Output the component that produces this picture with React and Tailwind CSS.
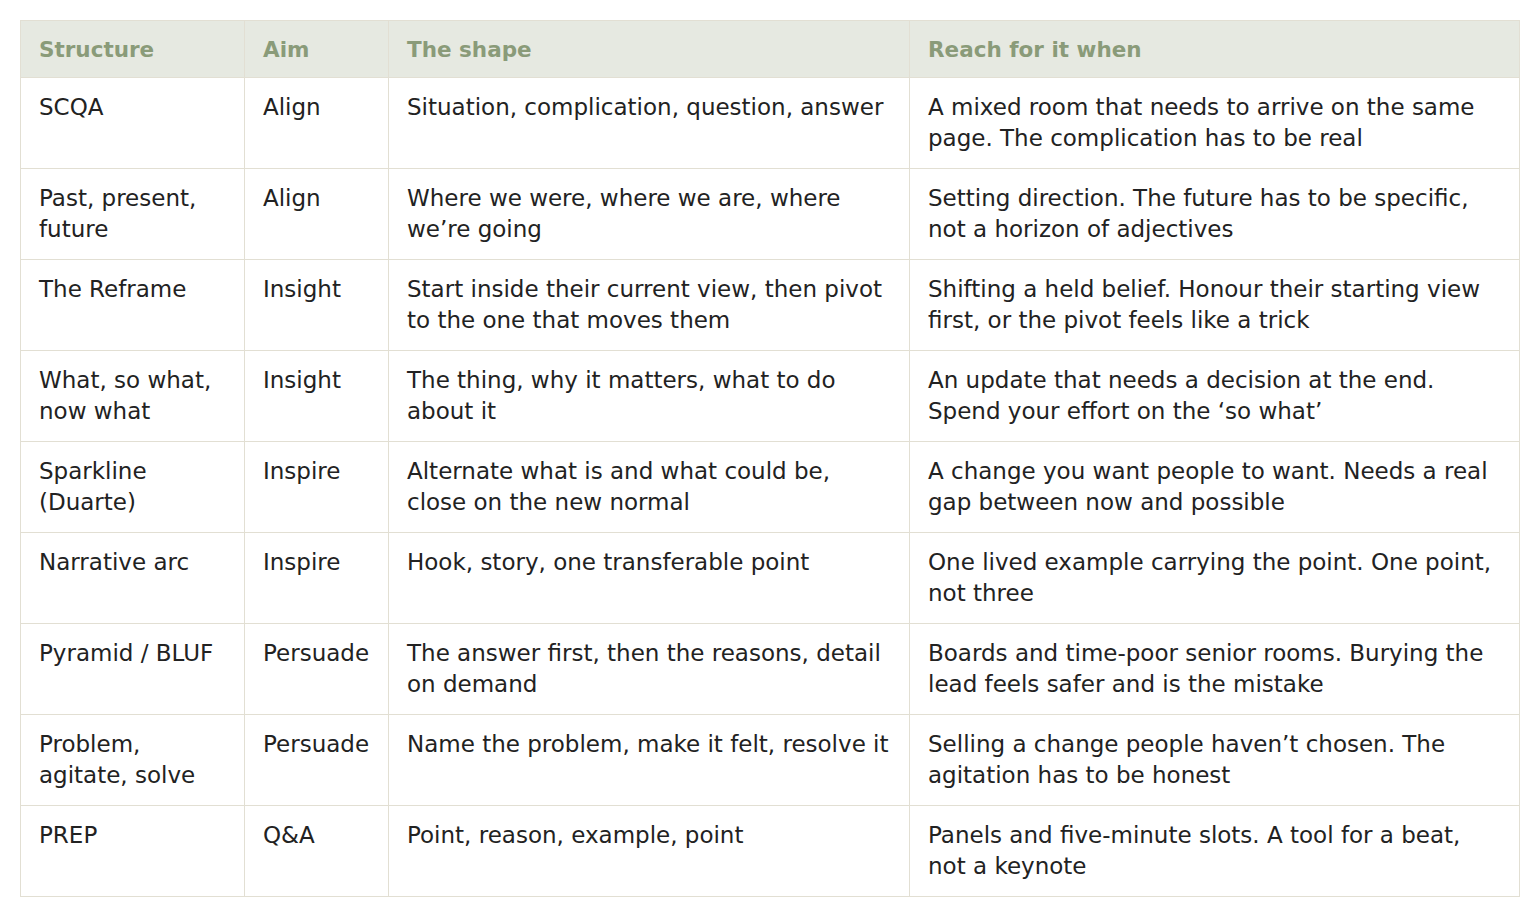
import React from 'react';

const rows = [
  ['SCQA', 'Align', 'Situation, complication, question, answer', 'A mixed room that needs to arrive on the same page. The complication has to be real'],
  ['Past, present, future', 'Align', 'Where we were, where we are, where we\u2019re going', 'Setting direction. The future has to be specific, not a horizon of adjectives'],
  ['The Reframe', 'Insight', 'Start inside their current view, then pivot to the one that moves them', 'Shifting a held belief. Honour their starting view first, or the pivot feels like a trick'],
  ['What, so what, now what', 'Insight', 'The thing, why it matters, what to do about it', 'An update that needs a decision at the end. Spend your effort on the \u2018so what\u2019'],
  ['Sparkline (Duarte)', 'Inspire', 'Alternate what is and what could be, close on the new normal', 'A change you want people to want. Needs a real gap between now and possible'],
  ['Narrative arc', 'Inspire', 'Hook, story, one transferable point', 'One lived example carrying the point. One point, not three'],
  ['Pyramid / BLUF', 'Persuade', 'The answer first, then the reasons, detail on demand', 'Boards and time-poor senior rooms. Burying the lead feels safer and is the mistake'],
  ['Problem, agitate, solve', 'Persuade', 'Name the problem, make it felt, resolve it', 'Selling a change people haven\u2019t chosen. The agitation has to be honest'],
  ['PREP', 'Q&A', 'Point, reason, example, point', 'Panels and five-minute slots. A tool for a beat, not a keynote'],
];

const headers = ['Structure', 'Aim', 'The shape', 'Reach for it when'];

export default function App() {
  return (
    <div className="min-h-screen bg-white p-5 font-['DejaVu_Sans',sans-serif]">
      <table className="w-[1499px] table-fixed border-collapse border border-[#e2dfd3]">
        <colgroup>
          <col className="w-[224px]" />
          <col className="w-[144px]" />
          <col className="w-[521px]" />
          <col className="w-[610px]" />
        </colgroup>
        <thead>
          <tr className="bg-[#e6e9e1]">
            {headers.map((h) => (
              <th
                key={h}
                className="border border-[#e2dfd3] px-[18px] pt-[15px] pb-[13px] text-left align-top text-[21.5px] leading-[28px] font-bold text-[#8a9b79]"
              >
                {h}
              </th>
            ))}
          </tr>
        </thead>
        <tbody>
          {rows.map((r) => (
            <tr key={r[0]}>
              {r.map((c, i) => (
                <td
                  key={i}
                  className="h-[91px] border border-[#e2dfd3] px-[18px] py-[14px] align-top text-[23px] leading-[31px] text-[#222222]"
                >
                  {c}
                </td>
              ))}
            </tr>
          ))}
        </tbody>
      </table>
    </div>
  );
}
